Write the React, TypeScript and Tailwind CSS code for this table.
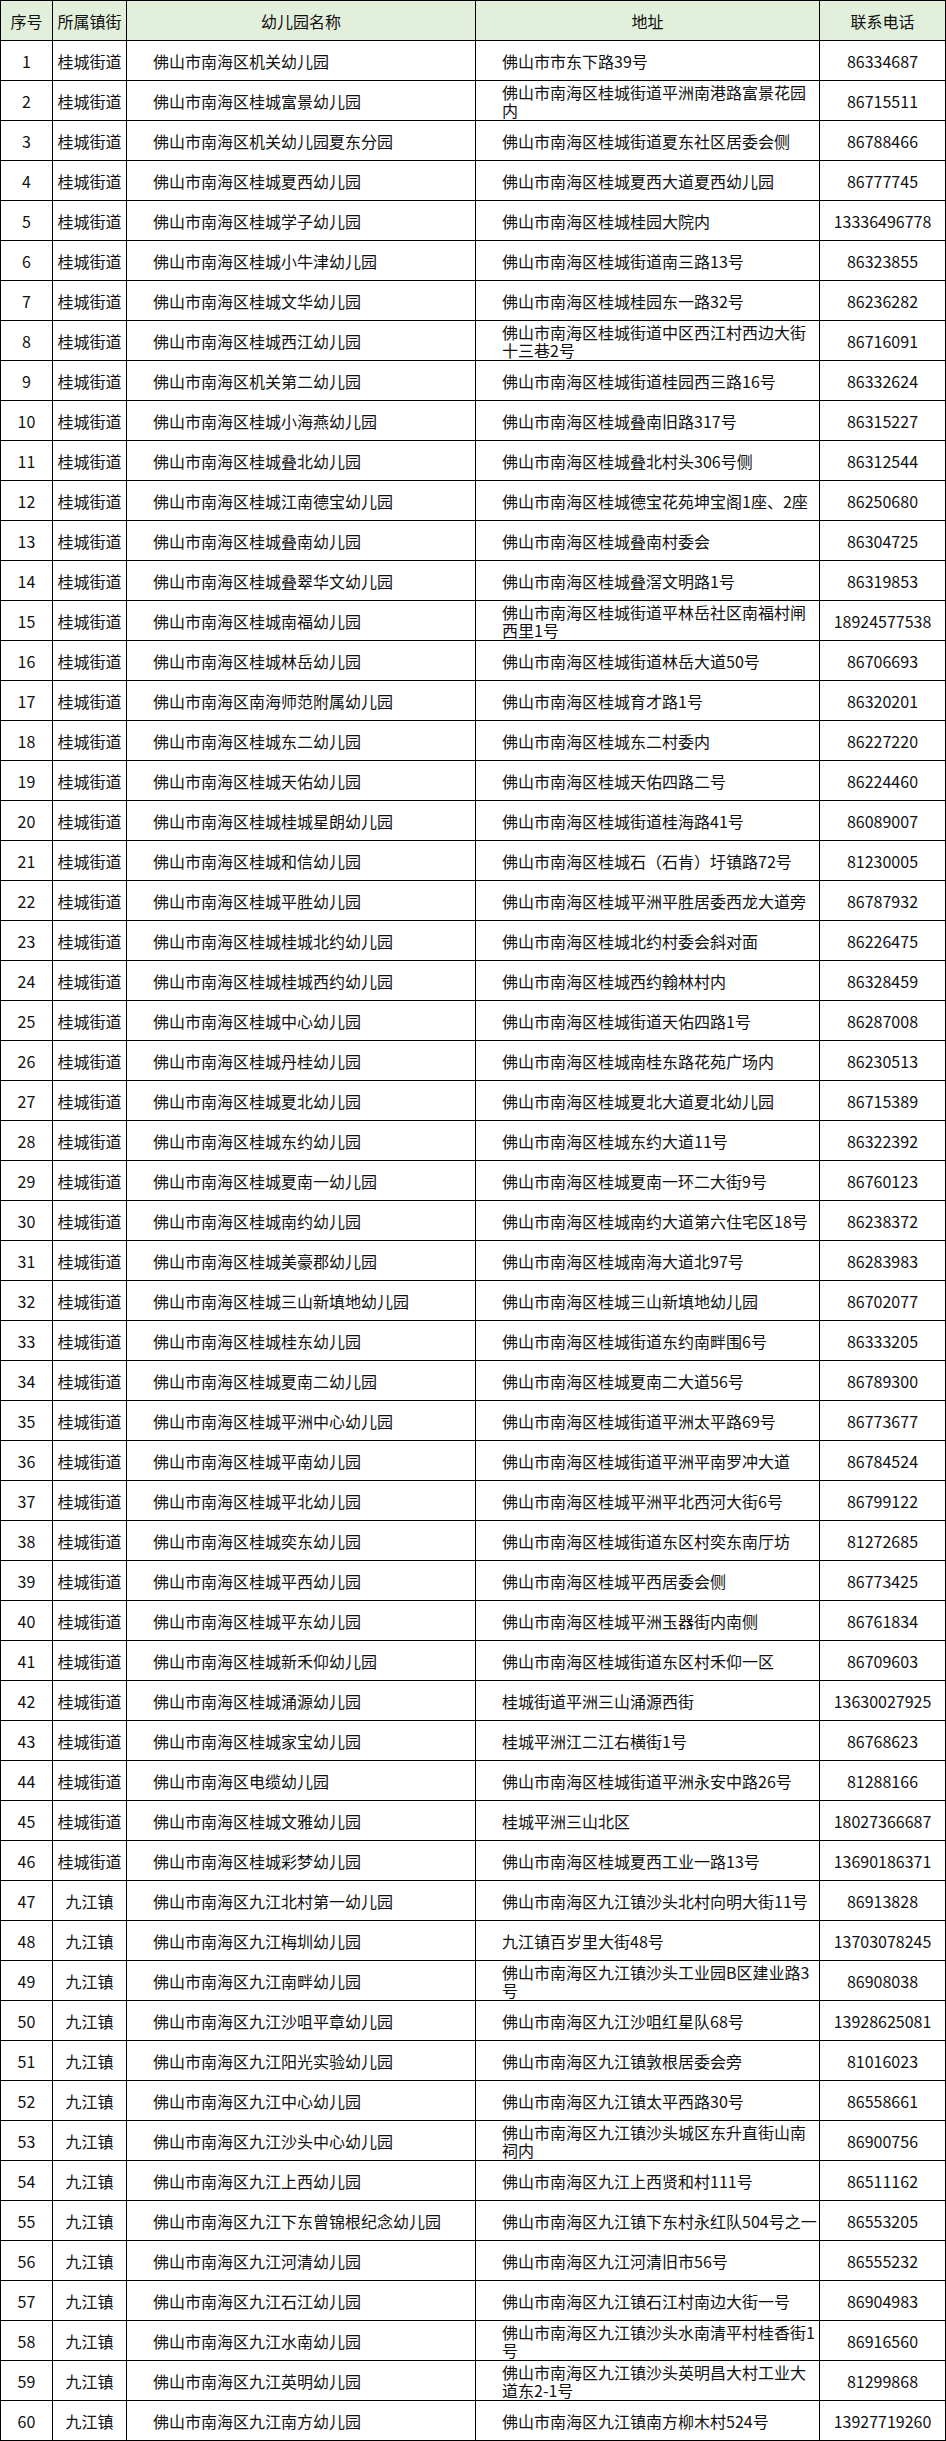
type Row = {
  town: string
  name: string
  address: string[]
  phone: string
}

const GC = '桂城街道'
const JJ = '九江镇'

const rows: Row[] = [
  { town: GC, name: '佛山市南海区机关幼儿园', address: ['佛山市市东下路39号'], phone: '86334687' },
  { town: GC, name: '佛山市南海区桂城富景幼儿园', address: ['佛山市南海区桂城街道平洲南港路富景花园', '内'], phone: '86715511' },
  { town: GC, name: '佛山市南海区机关幼儿园夏东分园', address: ['佛山市南海区桂城街道夏东社区居委会侧'], phone: '86788466' },
  { town: GC, name: '佛山市南海区桂城夏西幼儿园', address: ['佛山市南海区桂城夏西大道夏西幼儿园'], phone: '86777745' },
  { town: GC, name: '佛山市南海区桂城学子幼儿园', address: ['佛山市南海区桂城桂园大院内'], phone: '13336496778' },
  { town: GC, name: '佛山市南海区桂城小牛津幼儿园', address: ['佛山市南海区桂城街道南三路13号'], phone: '86323855' },
  { town: GC, name: '佛山市南海区桂城文华幼儿园', address: ['佛山市南海区桂城桂园东一路32号'], phone: '86236282' },
  { town: GC, name: '佛山市南海区桂城西江幼儿园', address: ['佛山市南海区桂城街道中区西江村西边大街', '十三巷2号'], phone: '86716091' },
  { town: GC, name: '佛山市南海区机关第二幼儿园', address: ['佛山市南海区桂城街道桂园西三路16号'], phone: '86332624' },
  { town: GC, name: '佛山市南海区桂城小海燕幼儿园', address: ['佛山市南海区桂城叠南旧路317号'], phone: '86315227' },
  { town: GC, name: '佛山市南海区桂城叠北幼儿园', address: ['佛山市南海区桂城叠北村头306号侧'], phone: '86312544' },
  { town: GC, name: '佛山市南海区桂城江南德宝幼儿园', address: ['佛山市南海区桂城德宝花苑坤宝阁1座、2座'], phone: '86250680' },
  { town: GC, name: '佛山市南海区桂城叠南幼儿园', address: ['佛山市南海区桂城叠南村委会'], phone: '86304725' },
  { town: GC, name: '佛山市南海区桂城叠翠华文幼儿园', address: ['佛山市南海区桂城叠滘文明路1号'], phone: '86319853' },
  { town: GC, name: '佛山市南海区桂城南福幼儿园', address: ['佛山市南海区桂城街道平林岳社区南福村闸', '西里1号'], phone: '18924577538' },
  { town: GC, name: '佛山市南海区桂城林岳幼儿园', address: ['佛山市南海区桂城街道林岳大道50号'], phone: '86706693' },
  { town: GC, name: '佛山市南海区南海师范附属幼儿园', address: ['佛山市南海区桂城育才路1号'], phone: '86320201' },
  { town: GC, name: '佛山市南海区桂城东二幼儿园', address: ['佛山市南海区桂城东二村委内'], phone: '86227220' },
  { town: GC, name: '佛山市南海区桂城天佑幼儿园', address: ['佛山市南海区桂城天佑四路二号'], phone: '86224460' },
  { town: GC, name: '佛山市南海区桂城桂城星朗幼儿园', address: ['佛山市南海区桂城街道桂海路41号'], phone: '86089007' },
  { town: GC, name: '佛山市南海区桂城和信幼儿园', address: ['佛山市南海区桂城石（石肯）圩镇路72号'], phone: '81230005' },
  { town: GC, name: '佛山市南海区桂城平胜幼儿园', address: ['佛山市南海区桂城平洲平胜居委西龙大道旁'], phone: '86787932' },
  { town: GC, name: '佛山市南海区桂城桂城北约幼儿园', address: ['佛山市南海区桂城北约村委会斜对面'], phone: '86226475' },
  { town: GC, name: '佛山市南海区桂城桂城西约幼儿园', address: ['佛山市南海区桂城西约翰林村内'], phone: '86328459' },
  { town: GC, name: '佛山市南海区桂城中心幼儿园', address: ['佛山市南海区桂城街道天佑四路1号'], phone: '86287008' },
  { town: GC, name: '佛山市南海区桂城丹桂幼儿园', address: ['佛山市南海区桂城南桂东路花苑广场内'], phone: '86230513' },
  { town: GC, name: '佛山市南海区桂城夏北幼儿园', address: ['佛山市南海区桂城夏北大道夏北幼儿园'], phone: '86715389' },
  { town: GC, name: '佛山市南海区桂城东约幼儿园', address: ['佛山市南海区桂城东约大道11号'], phone: '86322392' },
  { town: GC, name: '佛山市南海区桂城夏南一幼儿园', address: ['佛山市南海区桂城夏南一环二大街9号'], phone: '86760123' },
  { town: GC, name: '佛山市南海区桂城南约幼儿园', address: ['佛山市南海区桂城南约大道第六住宅区18号'], phone: '86238372' },
  { town: GC, name: '佛山市南海区桂城美豪郡幼儿园', address: ['佛山市南海区桂城南海大道北97号'], phone: '86283983' },
  { town: GC, name: '佛山市南海区桂城三山新填地幼儿园', address: ['佛山市南海区桂城三山新填地幼儿园'], phone: '86702077' },
  { town: GC, name: '佛山市南海区桂城桂东幼儿园', address: ['佛山市南海区桂城街道东约南畔围6号'], phone: '86333205' },
  { town: GC, name: '佛山市南海区桂城夏南二幼儿园', address: ['佛山市南海区桂城夏南二大道56号'], phone: '86789300' },
  { town: GC, name: '佛山市南海区桂城平洲中心幼儿园', address: ['佛山市南海区桂城街道平洲太平路69号'], phone: '86773677' },
  { town: GC, name: '佛山市南海区桂城平南幼儿园', address: ['佛山市南海区桂城街道平洲平南罗冲大道'], phone: '86784524' },
  { town: GC, name: '佛山市南海区桂城平北幼儿园', address: ['佛山市南海区桂城平洲平北西河大街6号'], phone: '86799122' },
  { town: GC, name: '佛山市南海区桂城奕东幼儿园', address: ['佛山市南海区桂城街道东区村奕东南厅坊'], phone: '81272685' },
  { town: GC, name: '佛山市南海区桂城平西幼儿园', address: ['佛山市南海区桂城平西居委会侧'], phone: '86773425' },
  { town: GC, name: '佛山市南海区桂城平东幼儿园', address: ['佛山市南海区桂城平洲玉器街内南侧'], phone: '86761834' },
  { town: GC, name: '佛山市南海区桂城新禾仰幼儿园', address: ['佛山市南海区桂城街道东区村禾仰一区'], phone: '86709603' },
  { town: GC, name: '佛山市南海区桂城涌源幼儿园', address: ['桂城街道平洲三山涌源西街'], phone: '13630027925' },
  { town: GC, name: '佛山市南海区桂城家宝幼儿园', address: ['桂城平洲江二江右横街1号'], phone: '86768623' },
  { town: GC, name: '佛山市南海区电缆幼儿园', address: ['佛山市南海区桂城街道平洲永安中路26号'], phone: '81288166' },
  { town: GC, name: '佛山市南海区桂城文雅幼儿园', address: ['桂城平洲三山北区'], phone: '18027366687' },
  { town: GC, name: '佛山市南海区桂城彩梦幼儿园', address: ['佛山市南海区桂城夏西工业一路13号'], phone: '13690186371' },
  { town: JJ, name: '佛山市南海区九江北村第一幼儿园', address: ['佛山市南海区九江镇沙头北村向明大街11号'], phone: '86913828' },
  { town: JJ, name: '佛山市南海区九江梅圳幼儿园', address: ['九江镇百岁里大街48号'], phone: '13703078245' },
  { town: JJ, name: '佛山市南海区九江南畔幼儿园', address: ['佛山市南海区九江镇沙头工业园B区建业路3', '号'], phone: '86908038' },
  { town: JJ, name: '佛山市南海区九江沙咀平章幼儿园', address: ['佛山市南海区九江沙咀红星队68号'], phone: '13928625081' },
  { town: JJ, name: '佛山市南海区九江阳光实验幼儿园', address: ['佛山市南海区九江镇敦根居委会旁'], phone: '81016023' },
  { town: JJ, name: '佛山市南海区九江中心幼儿园', address: ['佛山市南海区九江镇太平西路30号'], phone: '86558661' },
  { town: JJ, name: '佛山市南海区九江沙头中心幼儿园', address: ['佛山市南海区九江镇沙头城区东升直街山南', '祠内'], phone: '86900756' },
  { town: JJ, name: '佛山市南海区九江上西幼儿园', address: ['佛山市南海区九江上西贤和村111号'], phone: '86511162' },
  { town: JJ, name: '佛山市南海区九江下东曾锦根纪念幼儿园', address: ['佛山市南海区九江镇下东村永红队504号之一'], phone: '86553205' },
  { town: JJ, name: '佛山市南海区九江河清幼儿园', address: ['佛山市南海区九江河清旧市56号'], phone: '86555232' },
  { town: JJ, name: '佛山市南海区九江石江幼儿园', address: ['佛山市南海区九江镇石江村南边大街一号'], phone: '86904983' },
  { town: JJ, name: '佛山市南海区九江水南幼儿园', address: ['佛山市南海区九江镇沙头水南清平村桂香街1', '号'], phone: '86916560' },
  { town: JJ, name: '佛山市南海区九江英明幼儿园', address: ['佛山市南海区九江镇沙头英明昌大村工业大', '道东2-1号'], phone: '81299868' },
  { town: JJ, name: '佛山市南海区九江南方幼儿园', address: ['佛山市南海区九江镇南方柳木村524号'], phone: '13927719260' },
]

const cols = 'grid grid-cols-[52px_74px_349px_344px_126px]'
const cell = 'h-[40px] border-r border-b border-black flex items-center'

export default function App() {
  return (
    <div
      className="w-[946px] bg-white text-[16px] text-[#111]"
      style={{ fontFamily: '"Noto Sans CJK SC", "Noto Sans", sans-serif' }}
    >
      <div className="border-l border-t border-black">
        <div className={`${cols} bg-[#e2efda]`}>
          <div className={`${cell} justify-center`}>序号</div>
          <div className={`${cell} justify-center`}>所属镇街</div>
          <div className={`${cell} justify-center`}>幼儿园名称</div>
          <div className={`${cell} justify-center`}>地址</div>
          <div className={`${cell} justify-center`}>联系电话</div>
        </div>
        {rows.map((r, i) => (
          <div key={i} className={cols}>
            <div className={`${cell} justify-center`}>{i + 1}</div>
            <div className={`${cell} justify-center whitespace-nowrap`}>{r.town}</div>
            <div className={`${cell} pl-[26px] whitespace-nowrap`}>{r.name}</div>
            <div className={`${cell} pl-[26px]`}>
              <div className="leading-[18px]">
                {r.address.map((line, j) => (
                  <div key={j} className="whitespace-nowrap">
                    {line}
                  </div>
                ))}
              </div>
            </div>
            <div className={`${cell} justify-center`}>{r.phone}</div>
          </div>
        ))}
      </div>
    </div>
  )
}
